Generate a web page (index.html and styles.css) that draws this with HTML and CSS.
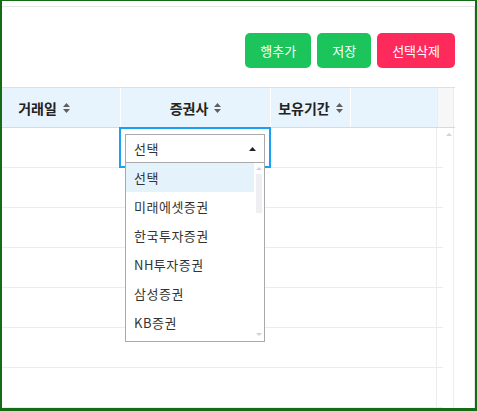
FILE: index.html
```html
<!DOCTYPE html>
<html lang="ko">
<head>
<meta charset="utf-8">
<link rel="stylesheet" href="styles.css">
</head>
<body>
<div class="frame">
  <div class="panel">
    <div class="toolbar">
      <button class="btn btn-green">행추가</button>
      <button class="btn btn-green">저장</button>
      <button class="btn btn-red">선택삭제</button>
    </div>
    <div class="grid">
      <div class="thead">
        <div class="th c1">거래일 <svg class="sort" width="7" height="10" viewBox="0 0 7 10"><polygon points="0,4 3.5,0 7,4"/><polygon points="0,6 7,6 3.5,10"/></svg></div>
        <div class="th c2">증권사 <svg class="sort" width="7" height="10" viewBox="0 0 7 10"><polygon points="0,4 3.5,0 7,4"/><polygon points="0,6 7,6 3.5,10"/></svg></div>
        <div class="th c3">보유기간 <svg class="sort" width="7" height="10" viewBox="0 0 7 10"><polygon points="0,4 3.5,0 7,4"/><polygon points="0,6 7,6 3.5,10"/></svg></div>
        <div class="th c4"></div>
        <div class="th-gutter"></div>
      </div>
      <div class="tbody">
        <div class="rows">
          <div class="tr">
            <div class="td c1"></div>
            <div class="td c2 focus">
              <div class="select">
                <span>선택</span>
                <svg class="caret" width="7" height="4" viewBox="0 0 7 4"><polygon points="0,4 3.5,0 7,4"/></svg>
                <div class="dropdown">
                  <ul class="options">
                    <li class="active">선택</li>
                    <li>미래에셋증권</li>
                    <li>한국투자증권</li>
                    <li>NH투자증권</li>
                    <li>삼성증권</li>
                    <li>KB증권</li>
                  </ul>
                  <div class="dscroll">
                    <span class="arr-up"></span>
                    <span class="thumb"></span>
                    <span class="arr-down"></span>
                  </div>
                </div>
              </div>
            </div>
            <div class="td c3"></div>
            <div class="td c4"></div>
          </div>
          <div class="tr"><div class="td c1"></div><div class="td c2"></div><div class="td c3"></div><div class="td c4"></div></div>
          <div class="tr"><div class="td c1"></div><div class="td c2"></div><div class="td c3"></div><div class="td c4"></div></div>
          <div class="tr"><div class="td c1"></div><div class="td c2"></div><div class="td c3"></div><div class="td c4"></div></div>
          <div class="tr"><div class="td c1"></div><div class="td c2"></div><div class="td c3"></div><div class="td c4"></div></div>
          <div class="tr"><div class="td c1"></div><div class="td c2"></div><div class="td c3"></div><div class="td c4"></div></div>
          <div class="tr"><div class="td c1"></div><div class="td c2"></div><div class="td c3"></div><div class="td c4"></div></div>
        </div>
        <div class="vscroll"><span class="arr-up"></span></div>
      </div>
    </div>
  </div>
</div>
</body>
</html>
```
FILE: styles.css
```css
html, body {
  margin: 0;
  padding: 0;
  background: #fff;
}
body {
  font-family: "Noto Sans CJK KR", "Noto Sans", sans-serif;
}
.frame {
  width: 477px;
  height: 411px;
  box-sizing: border-box;
  border: 2px solid #146c14;
  border-top-width: 1px;
  border-bottom-width: 3px;
  overflow: hidden;
  background: #fff;
}
.panel {
  margin-top: 5px;
  height: calc(100% - 5px);
  box-sizing: border-box;
  border-top: 1px solid #e6e6e6;
  border-right: 1px solid #e6e6e6;
}
.toolbar {
  display: flex;
  justify-content: flex-end;
  gap: 6px;
  padding: 26px 19px 0 0;
}
.btn {
  height: 35px;
  padding: 0 15px;
  border: 0;
  border-radius: 5px;
  color: #fff;
  font-family: "Noto Sans CJK KR", sans-serif;
  font-size: 13px;
  line-height: 35px;
}
.btn-green { background: #1bc55b; }
.btn-red { background: #ff2a5c; }

.grid {
  margin: 19px 19px 0 -34px;
}
.thead {
  display: flex;
  height: 41px;
  box-sizing: border-box;
  border-top: 1px solid #cde4f4;
  border-bottom: 1px solid #c6dff1;
}
.th {
  box-sizing: border-box;
  background: #e7f4fd;
  display: flex;
  align-items: center;
  justify-content: center;
  gap: 6px;
  font-size: 14px;
  font-weight: 700;
  color: #222;
}
.th + .th { border-left: 1px solid #fff; }
.c1 { width: 152px; }
.c2 { width: 150px; }
.c3 { width: 80px; }
.c4 { width: 87px; }
.sort { fill: #5f5f5f; }
.th-gutter {
  width: 17px;
  box-sizing: border-box;
  background: #f7f7f7;
  border-left: 1px solid #ececec;
  border-right: 1px solid #ececec;
}

.tbody {
  display: flex;
}
.rows {
  width: 475px;
  flex: none;
}
.tr {
  display: flex;
  height: 40px;
  box-sizing: border-box;
  border-bottom: 1px solid #ececec;
}
.td {
  box-sizing: border-box;
  flex: none;
}
.focus {
  position: relative;
  outline: 2px solid #1aa1f1;
  outline-offset: -1px;
  padding: 6px 5px 0;
}
.select {
  position: relative;
  height: 29px;
  box-sizing: border-box;
  border: 1px solid #a9a9a9;
  display: flex;
  align-items: center;
  justify-content: space-between;
  padding: 0 8px;
  font-size: 13px;
  letter-spacing: 0.5px;
  color: #333;
  background: #fff;
}
.caret { fill: #222; }
.dropdown {
  position: absolute;
  z-index: 2;
  top: 100%;
  left: -1px;
  width: 140px;
  height: 180px;
  box-sizing: border-box;
  border: 1px solid #a9a9a9;
  background: #fff;
  display: flex;
  overflow: hidden;
}
.options {
  list-style: none;
  margin: 0;
  padding: 0;
  width: 128px;
  flex: none;
}
.options li {
  height: 29px;
  line-height: 29px;
  padding-left: 8px;
  font-size: 13px;
  letter-spacing: 0.5px;
  color: #333;
}
.options li.active { background: #e4f2fc; }
.dscroll {
  flex: 1;
  display: flex;
  flex-direction: column;
  align-items: center;
  padding: 4px 0 5px;
  box-sizing: border-box;
}
.arr-up, .arr-down {
  display: block;
  width: 0;
  height: 0;
  border-left: 3px solid transparent;
  border-right: 3px solid transparent;
}
.arr-up { border-bottom: 3px solid #d2d2d2; }
.arr-down { border-top: 3px solid #d2d2d2; margin-top: auto; }
.thumb {
  display: block;
  width: 6px;
  height: 39px;
  margin-top: 4px;
  background: #efeff1;
}
.vscroll {
  width: 18px;
  height: 290px;
  flex: none;
  margin-left: -7px;
  box-sizing: border-box;
  border-left: 1px solid #ececec;
  border-right: 1px solid #ececec;
  padding: 5px 0 0 9px;
}
```
